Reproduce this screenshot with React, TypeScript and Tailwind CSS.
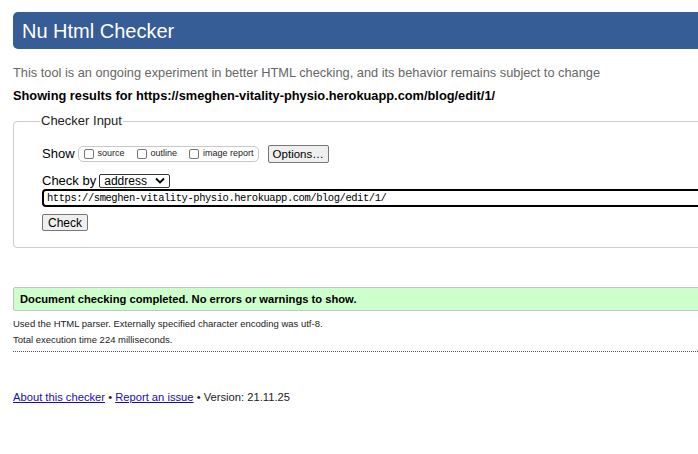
import React from 'react';

const url = 'https://smeghen-vitality-physio.herokuapp.com/blog/edit/1/';

const Box = ({ label }: { label: string }) => (
  <label className="flex items-center gap-[4px] text-[9px] text-[#222]">
    <span className="inline-block w-[10px] h-[10px] border border-[#767676] rounded-[2px] bg-white" />
    {label}
  </label>
);

const App = () => {
  return (
    <div className="w-full min-h-[454px] overflow-hidden bg-white text-black" style={{ fontFamily: '"Liberation Sans", Arial, sans-serif' }}>
      <div className="w-[740px] ml-[13px]">
        <h1 className="mt-[12px] h-[37px] flex items-center pl-[9px] bg-[#365d95] text-white text-[20px] rounded-[5px]">
          Nu Html Checker
        </h1>

        <p className="mt-[16px] text-[12.8px] leading-[16px] text-[#666]">
          This tool is an ongoing experiment in better HTML checking, and its behavior remains subject to change
        </p>
        <p className="mt-[7px] text-[12.8px] leading-[16px] font-bold">Showing results for {url}</p>

        <fieldset className="mt-[9px] border border-[#ccc] rounded-[4px] pl-[28px] pr-0 pt-[16px] pb-[16px]">
          <legend className="-ml-[2px] px-[1px] text-[13px] leading-[16px] text-[#222]">Checker Input</legend>

          <div className="flex items-center h-[18px]">
            <span className="text-[13px] mr-[3px]">Show</span>
            <span className="flex items-center gap-[12px] h-[16px] border border-[#c8c8c8] rounded-[5px] pl-[5px] pr-[4px]">
              <Box label="source" />
              <Box label="outline" />
              <Box label="image report" />
            </span>
            <button className="ml-[9px] h-[18px] px-[4px] text-[11.5px] bg-[#efefef] border border-[#767676] rounded-[2px]">
              Options…
            </button>
          </div>

          <div className="flex items-center mt-[10px] h-[15px]">
            <span className="text-[13px] mr-[3px]">Check by</span>
            <span className="flex items-center justify-between w-[71px] h-[14px] border border-[#333] rounded-[2px] pl-[4px] pr-[4px] text-[12px] leading-none">
              address
              <svg width="10" height="7" viewBox="0 0 10 7">
                <path d="M1 1.5 L5 5.5 L9 1.5" fill="none" stroke="#000" strokeWidth="1.8" />
              </svg>
            </span>
          </div>

          <div className="mt-[1px] h-[18px] flex items-center border-[2.5px] border-black rounded-l-[4px] pl-[3px]">
            <span className="text-[10.5px] leading-none tracking-[-0.45px]" style={{ fontFamily: '"Liberation Mono", "DejaVu Sans Mono", monospace' }}>
              {url}
            </span>
          </div>

          <button className="mt-[7px] h-[17px] px-[5px] text-[12px] leading-none bg-[#efefef] border border-[#767676] rounded-[2px] flex items-center">
            Check
          </button>
        </fieldset>

        <div className="mt-[39px] h-[24px] flex items-center pl-[6px] bg-[#ccffcc] border border-[#c4c4c4] rounded-l-[2px]">
          <span className="text-[11.2px] font-bold">Document checking completed. No errors or warnings to show.</span>
        </div>

        <div className="mt-[5px] text-[9.5px] leading-[16px] text-[#222]">
          <p>Used the HTML parser. Externally specified character encoding was utf-8.</p>
          <p>Total execution time 224 milliseconds.</p>
        </div>
        <div className="mt-[3px] w-[685px] border-b border-dotted border-[#555]" />

        <p className="mt-[37px] text-[11.2px] leading-[16px] text-[#222]">
          <a href="#" className="text-[#1a0dab] underline">About this checker</a> •{' '}
          <a href="#" className="text-[#1a0dab] underline">Report an issue</a> • Version: 21.11.25
        </p>
      </div>
    </div>
  );
};

export default App;
